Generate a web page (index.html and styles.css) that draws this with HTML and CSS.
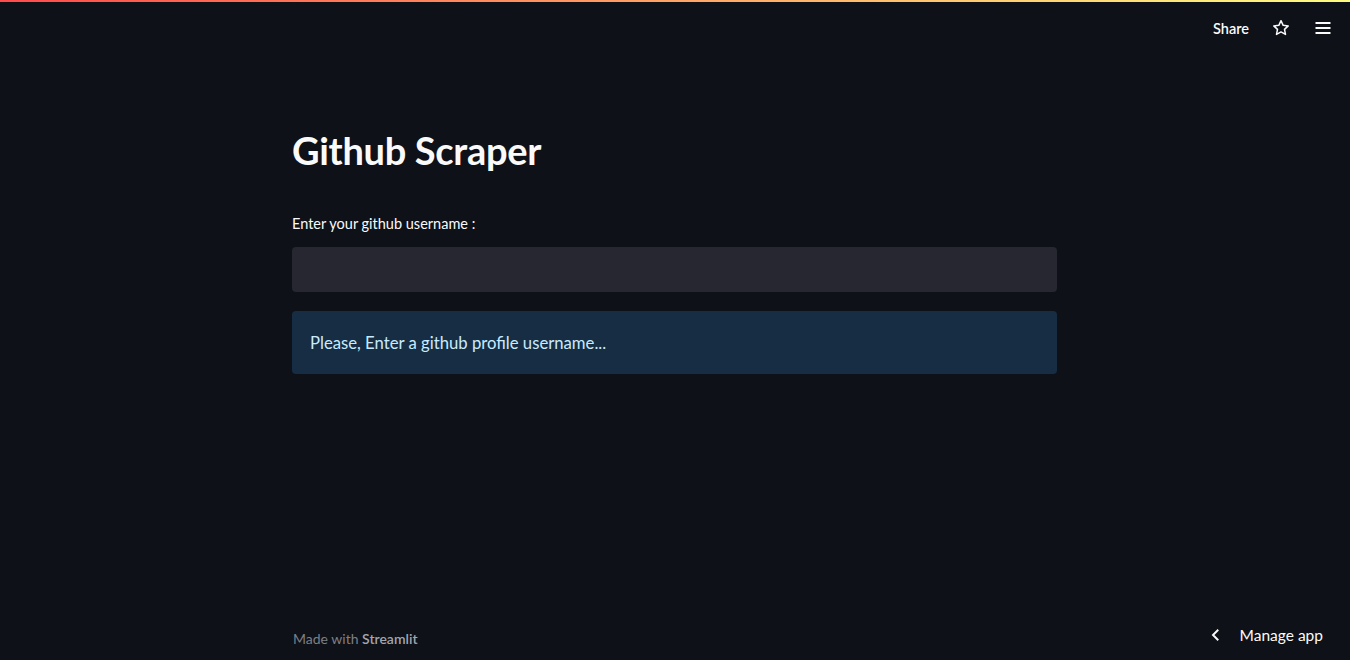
FILE: index.html
```html
<!DOCTYPE html>
<html>
<head>
<meta charset="utf-8">
<link rel="stylesheet" href="styles.css">
</head>
<body>
<div class="decoration"></div>
<header class="toolbar">
  <span class="share">Share</span>
  <svg class="icon star" viewBox="0 0 24 24" width="20" height="20"><path d="M12 3.2l2.6 5.6 6.1.7-4.5 4.2 1.2 6-5.4-3-5.4 3 1.2-6-4.5-4.2 6.1-.7z" fill="none" stroke="#fafafa" stroke-width="1.8" stroke-linejoin="round"/></svg>
  <svg class="icon menu" viewBox="0 0 24 24" width="20" height="20"><path d="M3 6h18M3 12h18M3 18h18" stroke="#fafafa" stroke-width="2.2"/></svg>
</header>
<main class="main">
  <div class="block">
    <h1 class="title">Github Scraper</h1>
    <label class="label">Enter your github username :</label>
    <div class="input"></div>
    <div class="info">Please, Enter a github profile username...</div>
  </div>
</main>
<footer class="footer">
  <div class="made">Made with <span class="brand">Streamlit</span></div>
  <div class="manage">
    <svg viewBox="0 0 24 24" width="18" height="18"><path d="M15 5l-7 7 7 7" fill="none" stroke="#fafafa" stroke-width="2.6"/></svg>
    <span>Manage app</span>
  </div>
</footer>
</body>
</html>
```
FILE: styles.css
```css
* { box-sizing: border-box; }
html, body { margin: 0; padding: 0; }
body {
  width: 1350px;
  height: 660px;
  background: #0e1117;
  color: #fafafa;
  font-family: "Lato", "Noto Sans", sans-serif;
  display: flex;
  flex-direction: column;
  overflow: hidden;
}
.decoration {
  height: 2px;
  background: linear-gradient(90deg, #ff4b4b, #fffd80);
}
.toolbar {
  height: 52px;
  display: flex;
  align-items: center;
  justify-content: flex-end;
  padding-right: 17px;
}
.share {
  font-size: 14.5px;
  font-weight: 600;
  margin-right: 22px;
}
.star { margin-right: 22px; }
.main {
  flex: 1;
  display: flex;
  justify-content: center;
}
.block {
  width: 765px;
  margin-right: 1px;
  padding-top: 72px;
}
.title {
  margin: 0;
  font-size: 38px;
  font-weight: 700;
  line-height: 48px;
  letter-spacing: -0.3px;
}
.label {
  display: block;
  margin-top: 41px;
  font-size: 14.5px;
  line-height: 18px;
}
.input {
  margin-top: 14px;
  height: 45px;
  background: #262730;
  border-radius: 4px;
}
.info {
  margin-top: 19px;
  height: 63px;
  background: #172d43;
  border-radius: 4px;
  color: #c7ebff;
  font-size: 16.7px;
  padding: 0 18px;
  display: flex;
  align-items: center;
}
.footer {
  height: 44px;
  display: flex;
  justify-content: space-between;
  align-items: center;
  padding: 0 27px 0 293px;
  font-size: 14px;
}
.made { color: #7d7f87; }
.brand { color: #a3a5ad; font-weight: 600; }
.manage {
  display: flex;
  align-items: center;
  gap: 15px;
  font-size: 15.5px;
  padding-bottom: 6px;
}
```
